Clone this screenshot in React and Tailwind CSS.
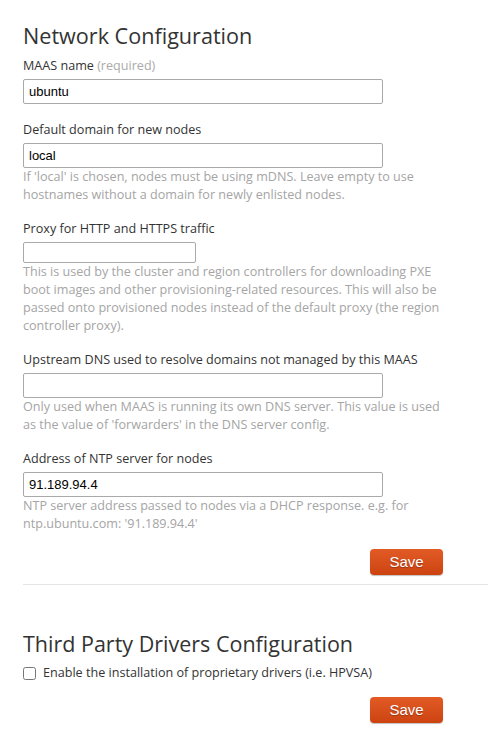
import React from "react";

const ui = { fontFamily: '"Open Sans", "Noto Sans", sans-serif' };
const arial = { fontFamily: '"Liberation Sans", Arial, sans-serif' };

function Label({ children }) {
  return (
    <label className="block text-[12.6px] leading-4 text-[#333]" style={ui}>
      {children}
    </label>
  );
}

function Help({ lines }) {
  return (
    <p className="text-[12.6px] leading-[18px] text-[#a5a5a5]" style={ui}>
      {lines.map((l, i) => (
        <span key={i} className="block whitespace-nowrap">
          {l}
        </span>
      ))}
    </p>
  );
}

function TextInput({ value, small }) {
  return (
    <input
      type="text"
      defaultValue={value}
      className={`block border border-[#a9a9a9] rounded-[2px] bg-white px-[5px] text-[13px] text-black outline-none ${
        small ? "w-[173px] h-[21px]" : "w-[360px] h-[25px]"
      }`}
      style={arial}
    />
  );
}

function SaveButton() {
  return (
    <div className="flex justify-end w-[420px]">
      <button
        className="w-[73px] h-[26px] rounded-[4px] bg-gradient-to-b from-[#e25b25] to-[#cc4310] text-white text-[15px] leading-[26px] shadow-[0_1px_1px_rgba(0,0,0,0.25)]"
        style={{ ...arial, textShadow: "0 1px 1px rgba(0,0,0,0.3)" }}
      >
        Save
      </button>
    </div>
  );
}

export default function App() {
  return (
    <div className="bg-white min-h-[754px] w-[488px] overflow-hidden">
      <div className="pl-[23px] pt-[23px]">
        <h2 className="text-[21.6px] leading-[26px] text-[#333]" style={ui}>
          Network Configuration
        </h2>

        <div className="mt-[9px]">
          <Label>
            MAAS name <span className="text-[#aaa]">(required)</span>
          </Label>
          <div className="mt-[5px]">
            <TextInput value="ubuntu" />
          </div>
        </div>

        <div className="mt-[18px]">
          <Label>Default domain for new nodes</Label>
          <div className="mt-[5px]">
            <TextInput value="local" />
          </div>
          <Help
            lines={[
              "If 'local' is chosen, nodes must be using mDNS. Leave empty to use",
              "hostnames without a domain for newly enlisted nodes.",
            ]}
          />
        </div>

        <div className="mt-[17px]">
          <Label>Proxy for HTTP and HTTPS traffic</Label>
          <div className="mt-[5px]">
            <TextInput value="" small />
          </div>
          <Help
            lines={[
              "This is used by the cluster and region controllers for downloading PXE",
              "boot images and other provisioning-related resources. This will also be",
              "passed onto provisioned nodes instead of the default proxy (the region",
              "controller proxy).",
            ]}
          />
        </div>

        <div className="mt-[17px]">
          <Label>Upstream DNS used to resolve domains not managed by this MAAS</Label>
          <div className="mt-[5px]">
            <TextInput value="" />
          </div>
          <Help
            lines={[
              "Only used when MAAS is running its own DNS server. This value is used",
              "as the value of 'forwarders' in the DNS server config.",
            ]}
          />
        </div>

        <div className="mt-[17px]">
          <Label>Address of NTP server for nodes</Label>
          <div className="mt-[5px]">
            <TextInput value="91.189.94.4" />
          </div>
          <Help
            lines={[
              "NTP server address passed to nodes via a DHCP response. e.g. for",
              "ntp.ubuntu.com: '91.189.94.4'",
            ]}
          />
        </div>

        <div className="mt-[16px]">
          <SaveButton />
        </div>

        <div className="mt-[9px] border-t border-[#e5e5e5]" />

        <h2 className="mt-[46px] text-[21.5px] leading-[26px] text-[#333]" style={ui}>
          Third Party Drivers Configuration
        </h2>

        <label className="mt-[8px] flex items-center gap-[7px] text-[12.6px] leading-4 text-[#333]" style={ui}>
          <input type="checkbox" className="m-0 w-[13px] h-[13px]" />
          Enable the installation of proprietary drivers (i.e. HPVSA)
        </label>

        <div className="mt-[16px]">
          <SaveButton />
        </div>
      </div>
    </div>
  );
}
